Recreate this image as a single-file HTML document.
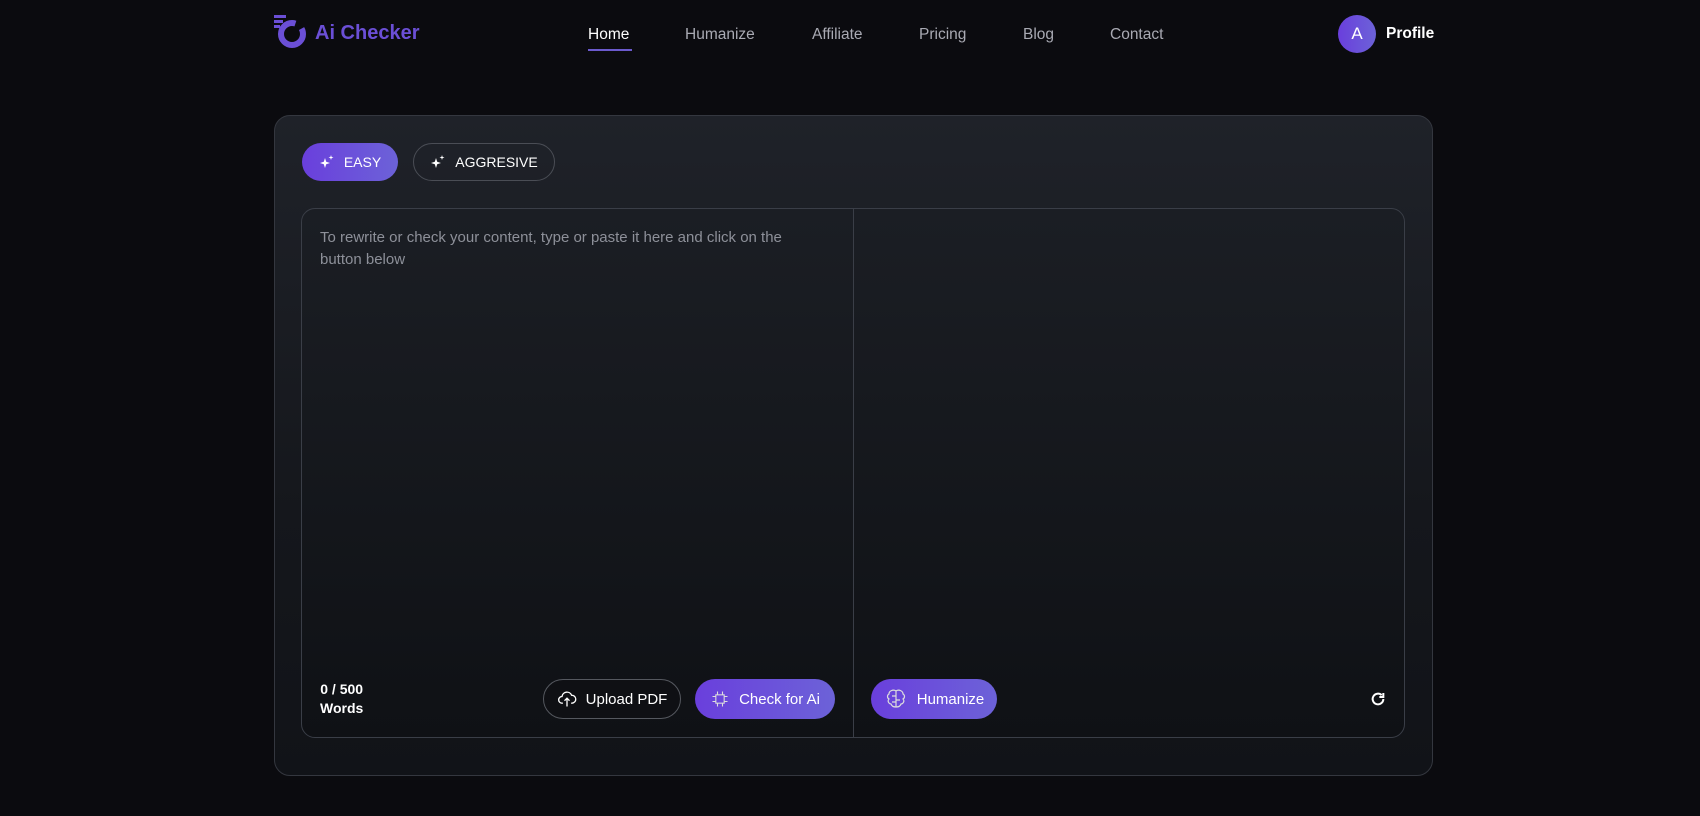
<!DOCTYPE html>
<html><head><meta charset="utf-8"><style>
*{margin:0;padding:0;box-sizing:border-box}
body{width:1700px;height:816px;background:#0b0b0f;font-family:"Liberation Sans",sans-serif;color:#fff;position:relative;overflow:hidden}
.a{position:absolute}
.nav{font-size:15.5px;color:#a9aab3;top:26px}
.card{left:274px;top:115px;width:1159px;height:661px;border:1px solid #34373f;border-radius:16px;background:linear-gradient(180deg,#1f2229 0%,#15171c 60%,#111318 100%)}
.pill{border-radius:20px;display:flex;align-items:center;justify-content:center;gap:9px;font-size:14px}
.grad{background:linear-gradient(90deg,#6a3fdc,#6c62d8)}
.box{left:301px;top:208px;width:1104px;height:530px;border:1px solid #3a3e47;border-radius:14px;background:linear-gradient(180deg,#1b1e24,#0f1115)}
</style></head><body>
<svg class="a" style="left:274px;top:15px" width="34" height="34" viewBox="0 0 34 34"><circle cx="18" cy="19" r="11" fill="none" stroke="#6b4fd6" stroke-width="6" stroke-dasharray="55 8"/><rect x="0" y="0" width="12" height="3" fill="#6b4fd6"/><rect x="0" y="5" width="9" height="3" fill="#6b4fd6"/><rect x="0" y="10" width="6" height="3" fill="#6b4fd6"/></svg>
<div class="a" style="left:315px;top:22px;font-size:20px;font-weight:bold;color:#6b4fd6">Ai Checker</div>
<div class="a nav" style="left:588px;color:#fff">Home</div>
<div class="a" style="left:588px;top:49px;width:44px;height:2px;background:#6b5acd"></div>
<div class="a nav" style="left:685px">Humanize</div>
<div class="a nav" style="left:812px">Affiliate</div>
<div class="a nav" style="left:919px">Pricing</div>
<div class="a nav" style="left:1023px">Blog</div>
<div class="a nav" style="left:1110px">Contact</div>
<div class="a grad" style="left:1338px;top:15px;width:38px;height:38px;border-radius:50%;display:flex;align-items:center;justify-content:center;font-size:17px">A</div>
<div class="a" style="left:1386px;top:25px;font-size:15.5px;font-weight:bold">Profile</div>
<div class="a card"></div>
<div class="a pill grad" style="left:302px;top:143px;width:96px;height:38px"><svg width="16" height="16" viewBox="0 0 16 16" fill="#fff"><path d="M6 4l1.2 3.8L11 9l-3.8 1.2L6 14l-1.2-3.8L1 9l3.8-1.2z"/><path d="M12 1l.6 1.9L14.5 3.5l-1.9.6L12 6l-.6-1.9L9.5 3.5l1.9-.6z"/></svg>EASY</div>
<div class="a pill" style="left:413px;top:143px;width:142px;height:38px;border:1px solid #4a4d55"><svg width="16" height="16" viewBox="0 0 16 16" fill="#fff"><path d="M6 4l1.2 3.8L11 9l-3.8 1.2L6 14l-1.2-3.8L1 9l3.8-1.2z"/><path d="M12 1l.6 1.9L14.5 3.5l-1.9.6L12 6l-.6-1.9L9.5 3.5l1.9-.6z"/></svg>AGGRESIVE</div>
<div class="a box"></div>
<div class="a" style="left:853px;top:209px;width:1px;height:528px;background:#3a3e47"></div>
<div class="a" style="left:320px;top:227px;width:520px;font-size:15px;line-height:22px;color:#8d9099">To rewrite or check your content, type or paste it here and click on the<br>button below</div>
<div class="a" style="left:320px;top:680px;font-size:14px;line-height:19px;text-align:center;font-weight:bold">0 / 500<br>Words</div>
<div class="a pill" style="left:543px;top:679px;width:138px;height:40px;border:1px solid #55585f;font-size:15px;background:#0f1014"><svg width="20" height="20" viewBox="0 0 24 24" fill="none" stroke="#fff" stroke-width="1.6"><path d="M7 17H6a4 4 0 0 1 0-8 6 6 0 0 1 11.5-1.5A4.5 4.5 0 0 1 18 17h-1M12 21v-9M9 14l3-3 3 3"/></svg>Upload PDF</div>
<div class="a pill grad" style="left:695px;top:679px;width:140px;height:40px;font-size:15px"><svg width="20" height="20" viewBox="0 0 24 24" fill="none" stroke="#ddd" stroke-width="1.3"><rect x="7" y="7" width="10" height="10"/><path d="M9 3v4M15 3v4M9 17v4M15 17v4M3 9h4M3 15h4M17 9h4M17 15h4"/></svg>Check for Ai</div>
<div class="a pill grad" style="left:871px;top:679px;width:126px;height:40px;font-size:15px"><svg width="24" height="24" viewBox="0 0 24 24" fill="none" stroke="#ddd" stroke-width="1.2"><path d="M12 4v16M12 4c-3-2-7 0-7 3-2 1-2 4 0 5-2 2 0 5 2 5 1 3 4 3 5 3M12 4c3-2 7 0 7 3 2 1 2 4 0 5 2 2 0 5-2 5-1 3-4 3-5 3M8 9h4M12 13h4M8 15h4"/></svg>Humanize</div>
<svg class="a" style="left:1370px;top:691px" width="16" height="16" viewBox="0 0 24 24" fill="none" stroke="#fff" stroke-width="3"><path d="M20 12a8 8 0 1 1-2.5-5.8"/><path d="M20 3v6h-6" stroke-linejoin="miter"/></svg>
</body></html>
